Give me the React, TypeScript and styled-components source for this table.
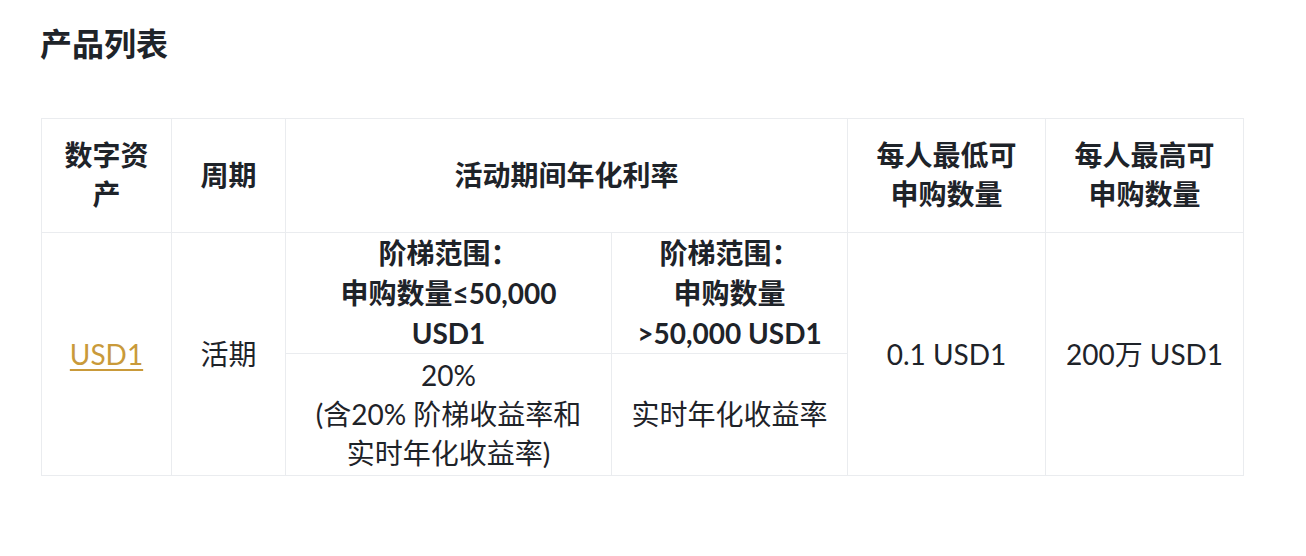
import React from "react";
import styled, { createGlobalStyle } from "styled-components";

const GlobalStyle = createGlobalStyle`
  html, body {
    margin: 0;
    padding: 0;
    background: #ffffff;
  }
  body {
    font-family: Lato, "Noto Sans CJK SC", sans-serif;
    color: #1e2329;
  }
`;

const Page = styled.main`
  padding: 24px 40px 0 41px;
`;

const Title = styled.h2`
  margin: 0 0 54px -1px;
  font-size: 32px;
  line-height: 40px;
  font-weight: 600;
  color: #1e2329;
`;

const Table = styled.table`
  width: 1203px;
  table-layout: fixed;
  border-collapse: collapse;
  border: 1px solid #eaecef;
  font-size: 28px;
  text-align: center;
`;

const HeadCell = styled.th`
  border: 1px solid #eaecef;
  padding: 17px 16px 18px;
  line-height: 39px;
  font-weight: 700;
  vertical-align: middle;
`;

const Cell = styled.td<{ $bold?: boolean; $tight?: boolean }>`
  border: 1px solid #eaecef;
  padding: ${(p) => (p.$tight ? "0 16px" : "2px 16px")};
  line-height: ${(p) => (p.$bold ? "40px" : "39px")};
  font-weight: ${(p) => (p.$bold ? 700 : 400)};
  vertical-align: middle;
`;

const AssetLink = styled.a`
  color: #c99a3a;
  text-decoration: underline;
  text-underline-offset: 4px;
  cursor: pointer;
`;

const columns = [130, 114, 326, 236, 198, 198];

export default function App() {
  return (
    <>
      <GlobalStyle />
      <Page>
        <Title>产品列表</Title>
        <Table>
          <colgroup>
            {columns.map((w, i) => (
              <col key={i} style={{ width: w }} />
            ))}
          </colgroup>
          <thead>
            <tr>
              <HeadCell>数字资产</HeadCell>
              <HeadCell>周期</HeadCell>
              <HeadCell colSpan={2}>活动期间年化利率</HeadCell>
              <HeadCell>每人最低可申购数量</HeadCell>
              <HeadCell>每人最高可申购数量</HeadCell>
            </tr>
          </thead>
          <tbody>
            <tr>
              <Cell rowSpan={2}>
                <AssetLink>USD1</AssetLink>
              </Cell>
              <Cell rowSpan={2}>活期</Cell>
              <Cell $bold $tight>
                阶梯范围：
                <br />
                申购数量≤50,000 USD1
              </Cell>
              <Cell $bold $tight>
                阶梯范围：
                <br />
                申购数量&gt;50,000 USD1
              </Cell>
              <Cell rowSpan={2}>0.1 USD1</Cell>
              <Cell rowSpan={2}>200万 USD1</Cell>
            </tr>
            <tr>
              <Cell>
                20%
                <br />
                (含20% 阶梯收益率和
                <br />
                实时年化收益率)
              </Cell>
              <Cell>实时年化收益率</Cell>
            </tr>
          </tbody>
        </Table>
      </Page>
    </>
  );
}
